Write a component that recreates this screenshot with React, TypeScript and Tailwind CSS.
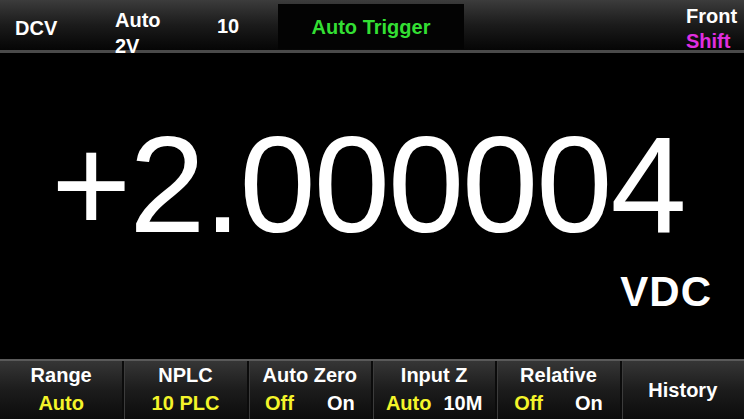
import React from "react";

const font = { fontFamily: '"Liberation Sans", Arial, sans-serif' };

function Col({ first, children }: { first?: boolean; children: React.ReactNode }) {
  return (
    <div
      className={
        "flex-1 flex flex-col items-center " +
        (first ? "" : "border-l-2 border-[#0b0b0b] shadow-[inset_1px_0_0_#3c3c3c]")
      }
    >
      {children}
    </div>
  );
}

export default function App() {
  return (
    <div className="w-[744px] h-[419px] bg-black flex flex-col overflow-hidden font-bold text-white text-[20px]" style={font}>
      {/* Top bar */}
      <div className="h-[53px] flex items-start bg-gradient-to-b from-[#3c3c3c] via-[#1b1b1b] to-[#060606] border-b-[3px] border-[#4a4a4a] pl-[15px] pr-[8px]">
        <div className="w-[100px] pt-[18px] leading-[20px]">DCV</div>
        <div className="w-[102px] pt-[7px] leading-[26px] flex flex-col">
          <span>Auto</span>
          <span>2V</span>
        </div>
        <div className="w-[61px] pt-[16px] leading-[20px]">10</div>
        <div className="mt-[4px] w-[186px] h-[45px] bg-[#030303] flex items-center justify-center leading-[20px] text-[#33df33]">
          Auto Trigger
        </div>
        <div className="flex-1" />
        <div className="w-[50px] pt-[4px] leading-[25px] flex flex-col">
          <span>Front</span>
          <span className="text-[#e02ee0]">Shift</span>
        </div>
      </div>

      {/* Main */}
      <div className="flex-1 flex flex-col">
        <div className="pt-[63px] text-center font-normal text-[137px] leading-none tracking-[-2px] pr-[8px]">
          +2.000004
        </div>
        <div className="mt-[18px] self-end pr-[32px] text-[42px] leading-none tracking-[1px]">VDC</div>
      </div>

      {/* Bottom bar */}
      <div className="h-[60px] flex border-t-2 border-[#5a5a5a] bg-gradient-to-b from-[#363636] via-[#1c1c1c] to-[#0c0c0c]">
        <Col first>
          <div className="pt-[4px] leading-[20px]">Range</div>
          <div className="mt-[8px] leading-[20px] text-[#f4f42a]">Auto</div>
        </Col>
        <Col>
          <div className="pt-[4px] leading-[20px]">NPLC</div>
          <div className="mt-[8px] leading-[20px] text-[#f4f42a]">10 PLC</div>
        </Col>
        <Col>
          <div className="pt-[4px] leading-[20px]">Auto Zero</div>
          <div className="mt-[8px] leading-[20px] flex gap-[33px]">
            <span className="text-[#f4f42a]">Off</span>
            <span>On</span>
          </div>
        </Col>
        <Col>
          <div className="pt-[4px] leading-[20px]">Input Z</div>
          <div className="mt-[8px] leading-[20px] flex gap-[12px]">
            <span className="text-[#f4f42a]">Auto</span>
            <span>10M</span>
          </div>
        </Col>
        <Col>
          <div className="pt-[4px] leading-[20px]">Relative</div>
          <div className="mt-[8px] leading-[20px] flex gap-[32px]">
            <span className="text-[#f4f42a]">Off</span>
            <span>On</span>
          </div>
        </Col>
        <Col>
          <div className="flex-1 flex items-center leading-[20px]">History</div>
        </Col>
      </div>
    </div>
  );
}
